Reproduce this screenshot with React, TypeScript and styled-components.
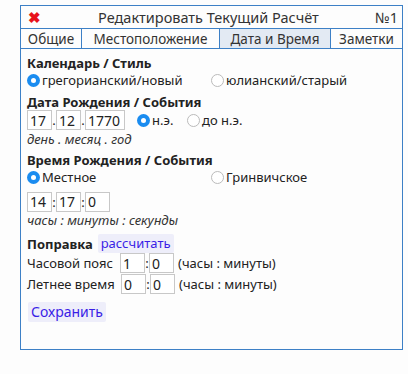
import React from "react";
import styled, { createGlobalStyle } from "styled-components";

const GlobalStyle = createGlobalStyle`
  html, body {
    margin: 0;
    padding: 0;
    background: #fdfdfd;
  }
  body {
    font-family: "Noto Sans", "Open Sans", sans-serif;
    font-size: 13px;
    color: #222;
  }
`;

const Page = styled.div`
  padding: 5px 6px 0 20px;
`;

const Panel = styled.div`
  width: 383px;
  height: 345px;
  border: 1px solid #3d80c6;
  box-sizing: border-box;
  display: flex;
  flex-direction: column;
`;

const TitleBar = styled.div`
  height: 22px;
  display: flex;
  align-items: center;
  padding: 0 4px 0 7px;
  border-bottom: 1px solid #3d80c6;
  font-size: 14.5px;
  color: #333;
`;

const CloseIcon = styled.span`
  color: #e8121b;
  font-weight: 900;
  font-size: 15px;
  width: 14px;
  display: flex;
  align-items: center;
`;

const Title = styled.div`
  flex: 1;
  text-align: center;
`;

const TabBar = styled.div`
  height: 19px;
  display: flex;
  border-bottom: 1px solid #3d80c6;
`;

const Tab = styled.div<{ $w: number; $active?: boolean }>`
  width: ${(p) => p.$w}px;
  box-sizing: border-box;
  display: flex;
  align-items: center;
  justify-content: center;
  font-size: 13.5px;
  color: #333;
  background: ${(p) => (p.$active ? "#e3eaf3" : "transparent")};
  border-right: 1px solid #3d80c6;
  &:last-child {
    border-right: 0;
    flex: 1;
  }
`;

const Body = styled.div`
  padding: 5px 6px;
  display: flex;
  flex-direction: column;
`;

const Heading = styled.div<{ $mt?: number }>`
  font-weight: 700;
  margin-top: ${(p) => p.$mt ?? 0}px;
  line-height: 16px;
`;

const Row = styled.div<{ $mt?: number; $h?: number }>`
  display: flex;
  align-items: center;
  height: ${(p) => p.$h ?? 16}px;
  margin-top: ${(p) => p.$mt ?? 0}px;
`;

const RadioLabel = styled.label<{ $w?: number }>`
  display: flex;
  align-items: center;
  gap: 2px;
  width: ${(p) => (p.$w ? `${p.$w}px` : "auto")};
`;

const RadioDot = styled.span<{ $on?: boolean }>`
  width: 13px;
  height: 13px;
  border-radius: 50%;
  box-sizing: border-box;
  background: ${(p) => (p.$on ? "#1a8cf0" : "#fff")};
  border: ${(p) => (p.$on ? "none" : "1px solid #bbb")};
  display: flex;
  align-items: center;
  justify-content: center;
  &::after {
    content: "";
    width: 5px;
    height: 5px;
    border-radius: 50%;
    background: #fff;
    display: ${(p) => (p.$on ? "block" : "none")};
  }
`;

const Field = styled.div<{ $w: number }>`
  width: ${(p) => p.$w}px;
  height: 20px;
  box-sizing: border-box;
  border: 1px solid #c8c8c8;
  background: #fff;
  padding: 0 2px;
  display: flex;
  align-items: center;
  font-size: 14px;
`;

const Sep = styled.span<{ $w?: number }>`
  width: ${(p) => p.$w ?? 4}px;
  text-align: center;
`;

const Spacer = styled.span<{ $w: number }>`
  width: ${(p) => p.$w}px;
  flex: none;
`;

const Hint = styled.div`
  font-style: italic;
  color: #333;
  line-height: 18px;
`;

const Action = styled.span`
  background: #eeeefa;
  color: #3a1ee6;
  padding: 0 3px;
  border-radius: 2px;
  font-weight: 400;
  line-height: 19px;
`;

const FieldLabel = styled.span<{ $w: number }>`
  width: ${(p) => p.$w}px;
  flex: none;
`;

const Units = styled.span`
  margin-left: 4px;
`;

const SaveButton = styled(Action)`
  align-self: flex-start;
  margin-top: 8px;
  margin-left: 1px;
  font-size: 14px;
  line-height: 20px;
  padding: 0 3px;
`;

const Radio: React.FC<{ on?: boolean; w?: number; children: React.ReactNode }> = ({
  on,
  w,
  children,
}) => (
  <RadioLabel $w={w}>
    <RadioDot $on={on} />
    {children}
  </RadioLabel>
);

export default function App() {
  return (
    <Page>
      <GlobalStyle />
      <Panel>
        <TitleBar>
          <CloseIcon>✖</CloseIcon>
          <Title>Редактировать Текущий Расчёт</Title>
          <span>№1</span>
        </TitleBar>
        <TabBar>
          <Tab $w={61}>Общие</Tab>
          <Tab $w={138}>Местоположение</Tab>
          <Tab $w={111} $active>
            Дата и Время
          </Tab>
          <Tab $w={71}>Заметки</Tab>
        </TabBar>
        <Body>
          <Heading $mt={1}>Календарь / Стиль</Heading>
          <Row $h={18}>
            <Radio on w={184}>
              грегорианский/новый
            </Radio>
            <Radio>юлианский/старый</Radio>
          </Row>
          <Heading $mt={5}>Дата Рождения / События</Heading>
          <Row $h={20}>
            <Field $w={25}>17</Field>
            <Sep>.</Sep>
            <Field $w={25}>12</Field>
            <Sep>.</Sep>
            <Field $w={40}>1770</Field>
            <Spacer $w={12} />
            <Radio on w={50}>
              н.э.
            </Radio>
            <Radio>до н.э.</Radio>
          </Row>
          <Hint>день . месяц . год</Hint>
          <Heading $mt={4}>Время Рождения / События</Heading>
          <Row $h={18}>
            <Radio on w={184}>
              Местное
            </Radio>
            <Radio>Гринвичское</Radio>
          </Row>
          <Row $mt={6} $h={19}>
            <Field $w={25}>14</Field>
            <Sep>:</Sep>
            <Field $w={25}>17</Field>
            <Sep>:</Sep>
            <Field $w={25}>0</Field>
          </Row>
          <Hint>часы : минуты : секунды</Hint>
          <Row $mt={5} $h={19}>
            <Heading>Поправка</Heading>
            <Spacer $w={5} />
            <Action>рассчитать</Action>
          </Row>
          <Row $h={20}>
            <FieldLabel $w={93}>Часовой пояс</FieldLabel>
            <Field $w={25}>1</Field>
            <Sep>:</Sep>
            <Field $w={25}>0</Field>
            <Units>(часы : минуты)</Units>
          </Row>
          <Row $mt={1} $h={20}>
            <FieldLabel $w={94}>Летнее время</FieldLabel>
            <Field $w={25}>0</Field>
            <Sep>:</Sep>
            <Field $w={25}>0</Field>
            <Units>(часы : минуты)</Units>
          </Row>
          <SaveButton>Сохранить</SaveButton>
        </Body>
      </Panel>
    </Page>
  );
}
